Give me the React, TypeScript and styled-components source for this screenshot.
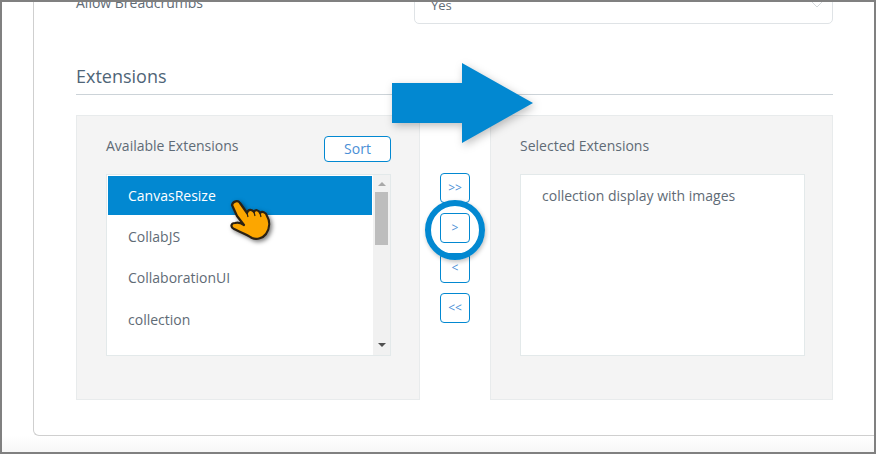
import styled, { createGlobalStyle } from 'styled-components';

const blue = '#0288d1';
const textColor = '#5f6b76';

const GlobalStyle = createGlobalStyle`
  html, body {
    margin: 0;
    padding: 0;
    background: #fff;
    font-family: "Open Sans", "Liberation Sans", sans-serif;
  }
  * {
    box-sizing: border-box;
  }
`;

const Frame = styled.div`
  position: relative;
  display: flex;
  flex-direction: column;
  width: 876px;
  height: 454px;
  overflow: hidden;
  border: 2px solid #808080;
  background: #fff;
`;

const Card = styled.div`
  margin: -40px 0 0 31px;
  height: 474px;
  flex: none;
  padding: 0 41px 0 42px;
  border: 1px solid #cfcfcf;
  border-top: none;
  border-right: none;
  border-radius: 0 0 0 6px;
`;

const FormRow = styled.div`
  display: flex;
  align-items: center;
  height: 42px;
  margin-top: 20px;
`;

const FormLabel = styled.label`
  width: 338px;
  font-size: 14px;
  color: ${textColor};
  margin-top: -2px;
`;

const SelectBox = styled.div`
  display: flex;
  justify-content: space-between;
  align-items: center;
  flex: 1;
  height: 42px;
  padding: 4px 9px 0 16px;
  border: 1px solid #dfe3e6;
  border-radius: 5px;
  font-size: 13px;
  color: ${textColor};
`;

const Heading = styled.h2`
  margin: 40px 0 0;
  height: 31px;
  border-bottom: 1px solid #ccd3d8;
  font-size: 18px;
  line-height: 24px;
  font-weight: 400;
  color: #4f6577;
`;

const Columns = styled.div`
  display: flex;
  margin-top: 20px;
  height: 285px;
`;

const Panel = styled.section`
  width: ${p => p.$width}px;
  flex: none;
  padding: 20px 28px 0 29px;
  background: #f4f4f4;
  border: 1px solid #e8ebec;
`;

const PanelHead = styled.div`
  display: flex;
  justify-content: space-between;
  align-items: flex-start;
  height: 38px;
`;

const PanelTitle = styled.span`
  font-size: 14px;
  line-height: 20px;
  color: ${textColor};
`;

const OutlineButton = styled.button`
  display: flex;
  align-items: center;
  justify-content: center;
  padding: 0 0 2px;
  background: #fff;
  border: 1px solid ${blue};
  border-radius: 4px;
  color: #4a8fd6;
  font-family: inherit;
`;

const SortButton = styled(OutlineButton)`
  width: 67px;
  height: 26px;
  font-size: 14px;
`;

const ListBox = styled.div`
  display: flex;
  height: 182px;
  background: #fff;
  border: 1px solid #e3e9ea;
`;

const Items = styled.ul`
  flex: 1;
  list-style: none;
  margin: 0;
  padding: 1px 0 0 1px;
`;

const Item = styled.li`
  height: ${p => (p.$selected ? 39 : 41.4)}px;
  padding-left: 20px;
  font-size: 14px;
  line-height: ${p => (p.$selected ? 39 : 44)}px;
  color: ${p => (p.$selected ? '#fff' : textColor)};
  background: ${p => (p.$selected ? blue : 'transparent')};
`;

const Scrollbar = styled.div`
  display: flex;
  flex-direction: column;
  align-items: center;
  justify-content: space-between;
  width: 17px;
  margin-left: 1px;
  padding: 7px 2px 8px;
  background: #f1f1f1;
`;

const Thumb = styled.div`
  width: 13px;
  height: 53px;
  margin: 6px 0 auto;
  background: #bdbdbd;
`;

const ScrollArrow = styled.div`
  width: 0;
  height: 0;
  border-left: 4px solid transparent;
  border-right: 4px solid transparent;
  border-bottom: ${p => (p.$down ? 0 : 4)}px solid #a8a8a8;
  border-top: ${p => (p.$down ? 4 : 0)}px solid #505050;
`;

const Transfer = styled.div`
  display: flex;
  flex-direction: column;
  align-items: center;
  gap: 10px;
  width: 70px;
  flex: none;
  padding-top: 58px;
`;

const TransferButton = styled(OutlineButton)`
  width: 30px;
  height: 30px;
  font-size: 12px;
`;

const SelectedBox = styled.div`
  height: 182px;
  width: 285px;
  padding: 11px 21px;
  background: #fff;
  border: 1px solid #e3e9ea;
  font-size: 14px;
  line-height: 20px;
  color: ${textColor};
`;

const Footer = styled.div`
  flex: 1;
  background: linear-gradient(#fff, #f7f7f7);
`;

const BigArrow = styled.svg`
  position: absolute;
  left: 380px;
  top: 61px;
  filter: drop-shadow(2px 3px 4px rgba(0, 0, 0, 0.25));
`;

const Ring = styled.div`
  position: absolute;
  left: 423px;
  top: 198px;
  width: 60px;
  height: 60px;
  border: 6px solid ${blue};
  border-radius: 50%;
  box-shadow: 1px 2px 4px rgba(0, 0, 0, 0.25);
`;

const Hand = styled.svg`
  position: absolute;
  left: 224px;
  top: 195px;
  filter: drop-shadow(2px 2px 2px rgba(0, 0, 0, 0.5));
`;

const items = ['CanvasResize', 'CollabJS', 'CollaborationUI', 'collection'];
const transferLabels = ['>>', '>', '<', '<<'];

export default function App() {
  return (
    <>
      <GlobalStyle />
      <Frame>
        <Card>
          <FormRow>
            <FormLabel>Allow Breadcrumbs</FormLabel>
            <SelectBox>
              Yes
              <svg width="12" height="8" viewBox="0 0 12 8" fill="none" stroke="#d5d9dc" strokeWidth="1">
                <path d="M1 1l5 5 5-5" />
              </svg>
            </SelectBox>
          </FormRow>
          <Heading>Extensions</Heading>
          <Columns>
            <Panel $width={344}>
              <PanelHead>
                <PanelTitle>Available Extensions</PanelTitle>
                <SortButton>Sort</SortButton>
              </PanelHead>
              <ListBox>
                <Items>
                  {items.map((name, i) => (
                    <Item key={name} $selected={i === 0}>
                      {name}
                    </Item>
                  ))}
                </Items>
                <Scrollbar>
                  <ScrollArrow />
                  <Thumb />
                  <ScrollArrow $down />
                </Scrollbar>
              </ListBox>
            </Panel>
            <Transfer>
              {transferLabels.map(label => (
                <TransferButton key={label}>{label}</TransferButton>
              ))}
            </Transfer>
            <Panel $width={343}>
              <PanelHead>
                <PanelTitle>Selected Extensions</PanelTitle>
              </PanelHead>
              <SelectedBox>collection display with images</SelectedBox>
            </Panel>
          </Columns>
        </Card>
        <Footer />
        <BigArrow width="160" height="90" viewBox="0 0 160 90">
          <path d="M10 20H80V0L151 40 80 80V60H10Z" fill={blue} />
        </BigArrow>
        <Ring />
        <Hand width="48" height="44" viewBox="0 0 48 44">
          <path
            d="M6 8C7 4 12 3 14 6L21 16C22 12 26 12 28 15C29 12 33 13 34 16C36 14 40 15 41 19C44 24 44 31 40 37C37 41 31 43 26 41C22 38 12 34 8 32C4 30 5 26 9 26C12 25 15 26 18 28L11 19Z"
            fill="#fca600"
            stroke="#2b2113"
            strokeWidth="2.2"
            strokeLinejoin="round"
          />
          <path d="M21 16l1 4M28 15l1 4M34 16l1 4" stroke="#2b2113" strokeWidth="1.2" fill="none" />
        </Hand>
      </Frame>
    </>
  );
}
